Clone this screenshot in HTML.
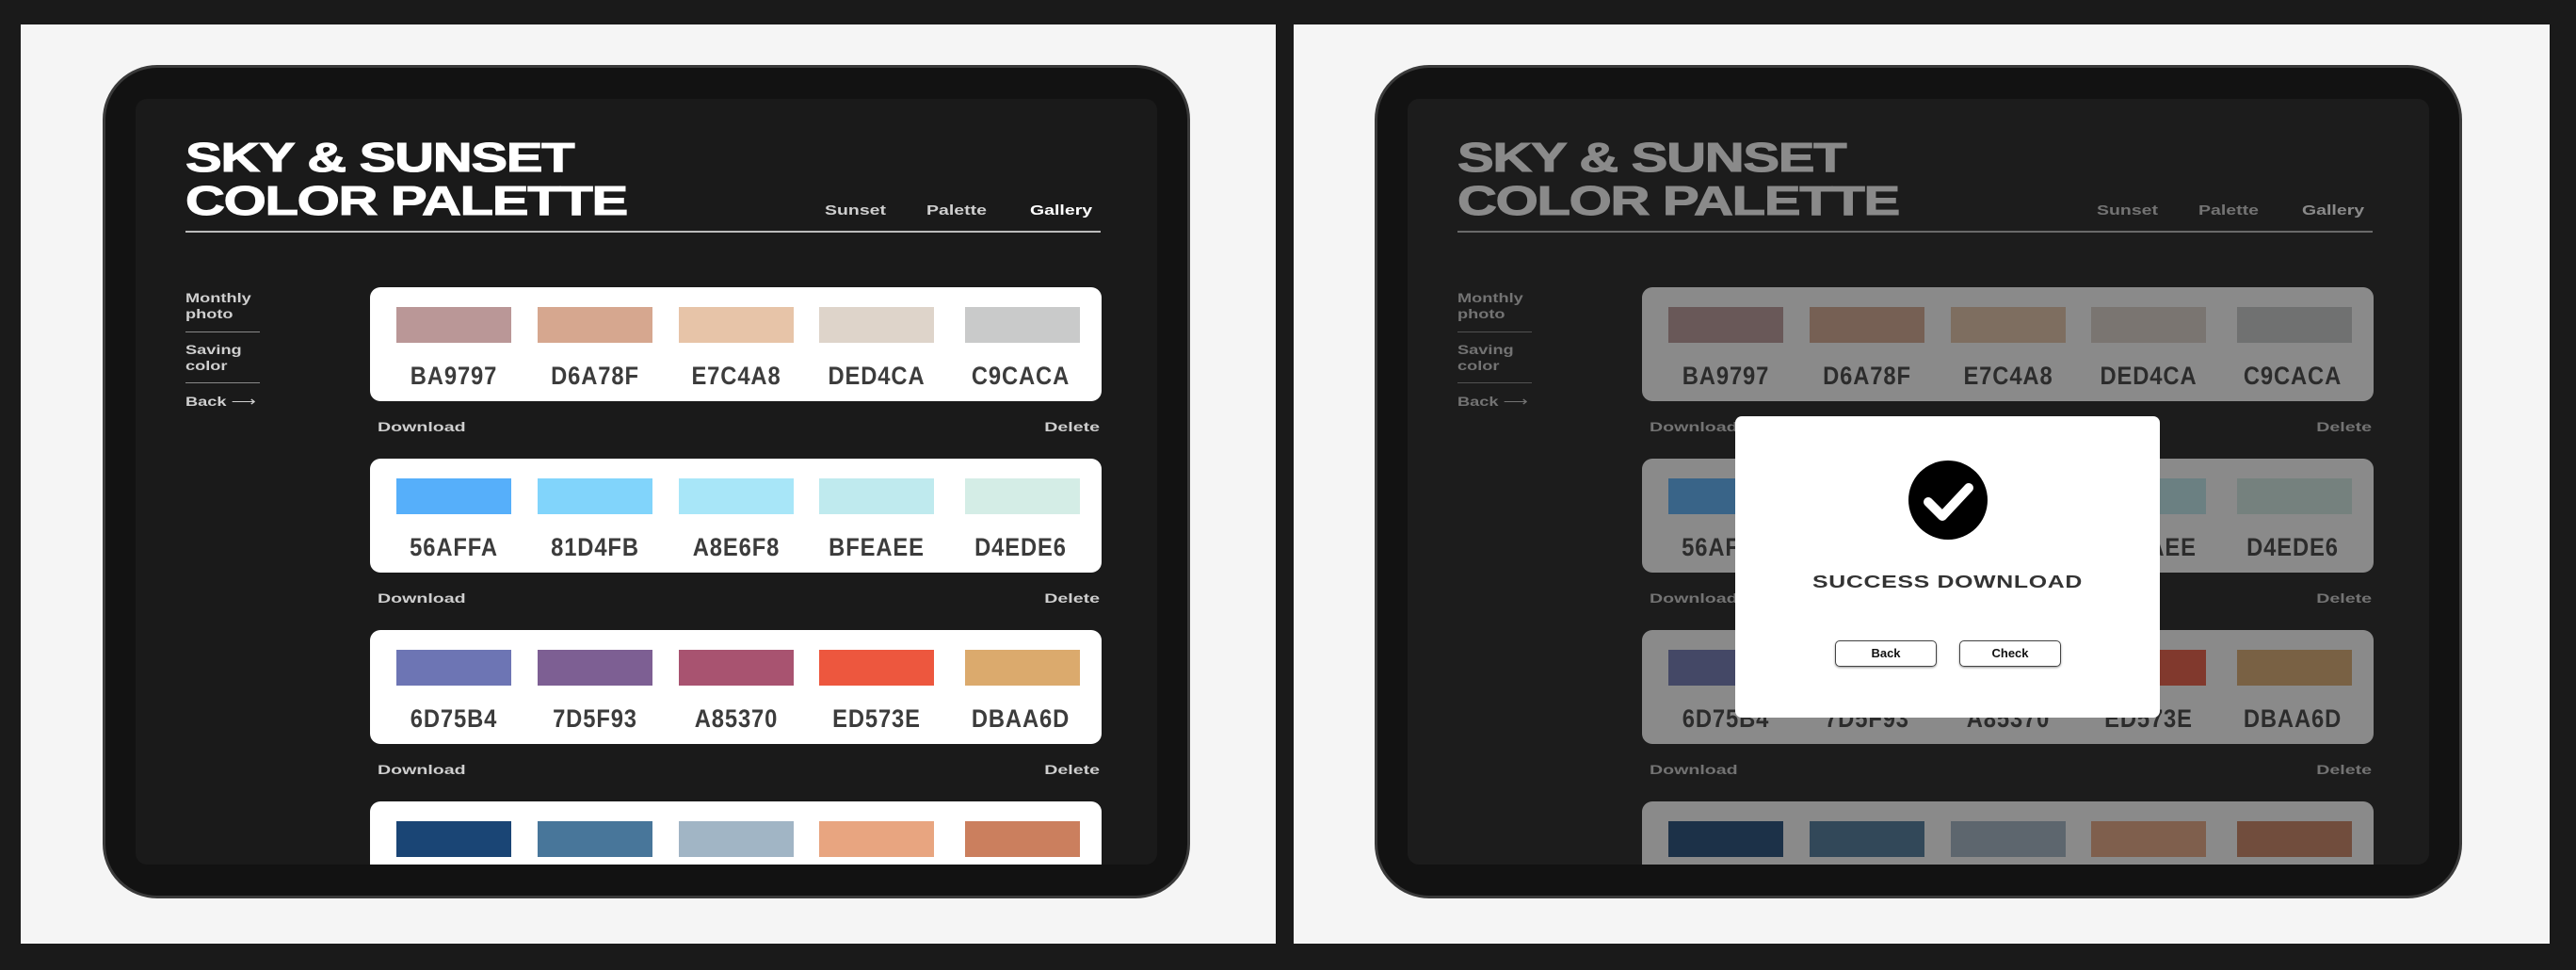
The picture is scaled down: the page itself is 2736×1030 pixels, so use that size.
<!DOCTYPE html>
<html><head><meta charset="utf-8"><style>
*{margin:0;padding:0;box-sizing:border-box}
body{width:2736px;height:1030px;background:#1a1a1a;position:relative;overflow:hidden;font-family:"Liberation Sans",Arial,sans-serif}
.panel{position:absolute;top:26px;height:976px;background:#f5f5f5}
.ipad{position:absolute;top:69px;width:1155px;height:885px;background:#121212;border-radius:58px;border:3px solid #3a3a3a}
.screen{position:absolute;left:32px;top:33px;width:1085px;height:813px;background:#1a1a1a;border-radius:12px;overflow:hidden}
.c{position:absolute}
.title{left:53px;top:40px;color:#fff;font-weight:900;font-size:44px;line-height:46px;transform:scaleX(1.32);transform-origin:left top;letter-spacing:-1px;white-space:nowrap;-webkit-text-stroke:1px currentColor}
.uline{left:53px;top:140px;width:972px;height:2px;background:#bbb}
.nav{top:110px;color:#cfcfcf;font-weight:bold;font-size:15px;transform:scaleX(1.3);transform-origin:left top;white-space:nowrap}
.side{left:53px;color:#cfcfcf;font-weight:bold;font-size:14px;line-height:17px;transform:scaleX(1.3);transform-origin:left top;white-space:nowrap}
.sl{left:53px;width:79px;height:1px;background:#888}
.card{left:249px;width:777px;height:121px;background:#fff;border-radius:11px}
.sw{position:absolute;top:21px;width:122px;height:38px}
.hx{position:absolute;top:79px;width:150px;text-align:center;font-size:27px;font-weight:bold;color:#3c3c3c;letter-spacing:1px;transform:scaleX(.88)}
.dl{left:257px;color:#cfcfcf;font-weight:bold;font-size:14px;transform:scaleX(1.4);transform-origin:left top}
.del{right:61px;color:#cfcfcf;font-weight:bold;font-size:14px;transform:scaleX(1.4);transform-origin:right top}
.dim{position:absolute;inset:0;background:rgba(30,30,30,.52)}
.modal{position:absolute;background:#fff;border-radius:7px;width:451px;height:320px}
.btn{position:absolute;top:238px;width:108px;height:28px;border:1px solid #444;border-radius:5px;box-shadow:0 1px 2px #999;font-weight:bold;font-size:13px;text-align:center;line-height:26px;color:#111}
</style></head><body>
<div class="panel" style="left:22px;width:1333px"></div>
<div class="panel" style="left:1374px;width:1334px"></div>

<div class="ipad" style="left:109px">
<div class="screen">
<div class="c title">SKY &amp; SUNSET<br>COLOR PALETTE</div>
<div class="c uline"></div>
<div class="c nav" style="left:732px">Sunset</div>
<div class="c nav" style="left:840px">Palette</div>
<div class="c nav" style="left:950px;color:#fff">Gallery</div>
<div class="c side" style="top:203px">Monthly<br>photo</div>
<div class="c sl" style="top:247px"></div>
<div class="c side" style="top:258px">Saving<br>color</div>
<div class="c sl" style="top:301px"></div>
<div class="c side" style="top:313px">Back <span style="font-weight:normal">⟶</span></div>

<div class="c card" style="top:200px">
<div class="sw" style="left:28px;background:#BA9797"></div><div class="sw" style="left:178px;background:#D6A78F"></div><div class="sw" style="left:328px;background:#E7C4A8"></div><div class="sw" style="left:477px;background:#DED4CA"></div><div class="sw" style="left:632px;background:#C9CACA"></div>
<div class="hx" style="left:14px">BA9797</div><div class="hx" style="left:164px">D6A78F</div><div class="hx" style="left:314px">E7C4A8</div><div class="hx" style="left:463px">DED4CA</div><div class="hx" style="left:616px">C9CACA</div>
</div>
<div class="c dl" style="top:340px">Download</div><div class="c del" style="top:340px">Delete</div>

<div class="c card" style="top:382px">
<div class="sw" style="left:28px;background:#56AFFA"></div><div class="sw" style="left:178px;background:#81D4FB"></div><div class="sw" style="left:328px;background:#A8E6F8"></div><div class="sw" style="left:477px;background:#BFEAEE"></div><div class="sw" style="left:632px;background:#D4EDE6"></div>
<div class="hx" style="left:14px">56AFFA</div><div class="hx" style="left:164px">81D4FB</div><div class="hx" style="left:314px">A8E6F8</div><div class="hx" style="left:463px">BFEAEE</div><div class="hx" style="left:616px">D4EDE6</div>
</div>
<div class="c dl" style="top:522px">Download</div><div class="c del" style="top:522px">Delete</div>

<div class="c card" style="top:564px">
<div class="sw" style="left:28px;background:#6D75B4"></div><div class="sw" style="left:178px;background:#7D5F93"></div><div class="sw" style="left:328px;background:#A85370"></div><div class="sw" style="left:477px;background:#ED573E"></div><div class="sw" style="left:632px;background:#DBAA6D"></div>
<div class="hx" style="left:14px">6D75B4</div><div class="hx" style="left:164px">7D5F93</div><div class="hx" style="left:314px">A85370</div><div class="hx" style="left:463px">ED573E</div><div class="hx" style="left:616px">DBAA6D</div>
</div>
<div class="c dl" style="top:704px">Download</div><div class="c del" style="top:704px">Delete</div>

<div class="c card" style="top:746px">
<div class="sw" style="left:28px;background:#1A4575"></div><div class="sw" style="left:178px;background:#48769A"></div><div class="sw" style="left:328px;background:#A1B5C5"></div><div class="sw" style="left:477px;background:#E8A580"></div><div class="sw" style="left:632px;background:#CB7F5E"></div>
</div>
</div>
</div>

<div class="ipad" style="left:1460px">
<div class="screen">
<div class="c title">SKY &amp; SUNSET<br>COLOR PALETTE</div>
<div class="c uline"></div>
<div class="c nav" style="left:732px">Sunset</div>
<div class="c nav" style="left:840px">Palette</div>
<div class="c nav" style="left:950px;color:#fff">Gallery</div>
<div class="c side" style="top:203px">Monthly<br>photo</div>
<div class="c sl" style="top:247px"></div>
<div class="c side" style="top:258px">Saving<br>color</div>
<div class="c sl" style="top:301px"></div>
<div class="c side" style="top:313px">Back <span style="font-weight:normal">⟶</span></div>

<div class="c card" style="top:200px">
<div class="sw" style="left:28px;background:#BA9797"></div><div class="sw" style="left:178px;background:#D6A78F"></div><div class="sw" style="left:328px;background:#E7C4A8"></div><div class="sw" style="left:477px;background:#DED4CA"></div><div class="sw" style="left:632px;background:#C9CACA"></div>
<div class="hx" style="left:14px">BA9797</div><div class="hx" style="left:164px">D6A78F</div><div class="hx" style="left:314px">E7C4A8</div><div class="hx" style="left:463px">DED4CA</div><div class="hx" style="left:616px">C9CACA</div>
</div>
<div class="c dl" style="top:340px">Download</div><div class="c del" style="top:340px">Delete</div>

<div class="c card" style="top:382px">
<div class="sw" style="left:28px;background:#56AFFA"></div><div class="sw" style="left:178px;background:#81D4FB"></div><div class="sw" style="left:328px;background:#A8E6F8"></div><div class="sw" style="left:477px;background:#BFEAEE"></div><div class="sw" style="left:632px;background:#D4EDE6"></div>
<div class="hx" style="left:14px">56AFFA</div><div class="hx" style="left:164px">81D4FB</div><div class="hx" style="left:314px">A8E6F8</div><div class="hx" style="left:463px">BFEAEE</div><div class="hx" style="left:616px">D4EDE6</div>
</div>
<div class="c dl" style="top:522px">Download</div><div class="c del" style="top:522px">Delete</div>

<div class="c card" style="top:564px">
<div class="sw" style="left:28px;background:#6D75B4"></div><div class="sw" style="left:178px;background:#7D5F93"></div><div class="sw" style="left:328px;background:#A85370"></div><div class="sw" style="left:477px;background:#ED573E"></div><div class="sw" style="left:632px;background:#DBAA6D"></div>
<div class="hx" style="left:14px">6D75B4</div><div class="hx" style="left:164px">7D5F93</div><div class="hx" style="left:314px">A85370</div><div class="hx" style="left:463px">ED573E</div><div class="hx" style="left:616px">DBAA6D</div>
</div>
<div class="c dl" style="top:704px">Download</div><div class="c del" style="top:704px">Delete</div>

<div class="c card" style="top:746px">
<div class="sw" style="left:28px;background:#1A4575"></div><div class="sw" style="left:178px;background:#48769A"></div><div class="sw" style="left:328px;background:#A1B5C5"></div><div class="sw" style="left:477px;background:#E8A580"></div><div class="sw" style="left:632px;background:#CB7F5E"></div>
</div>
<div class="dim"></div>
</div>
<div class="modal" style="left:380px;top:370px">
<svg style="position:absolute;left:183px;top:46px" width="86" height="86" viewBox="0 0 86 86"><circle cx="43" cy="43" r="42" fill="#000"/><path d="M22 45 L37 60 L65 30" fill="none" stroke="#fff" stroke-width="10" stroke-linecap="round" stroke-linejoin="round"/></svg>
<div style="position:absolute;left:0;width:451px;top:166px;text-align:center;font-weight:900;font-size:18px;color:#333;letter-spacing:0.5px;transform:scaleX(1.38)">SUCCESS DOWNLOAD</div>
<div class="btn" style="left:106px">Back</div>
<div class="btn" style="left:238px">Check</div>
</div>
</div>
</body></html>
